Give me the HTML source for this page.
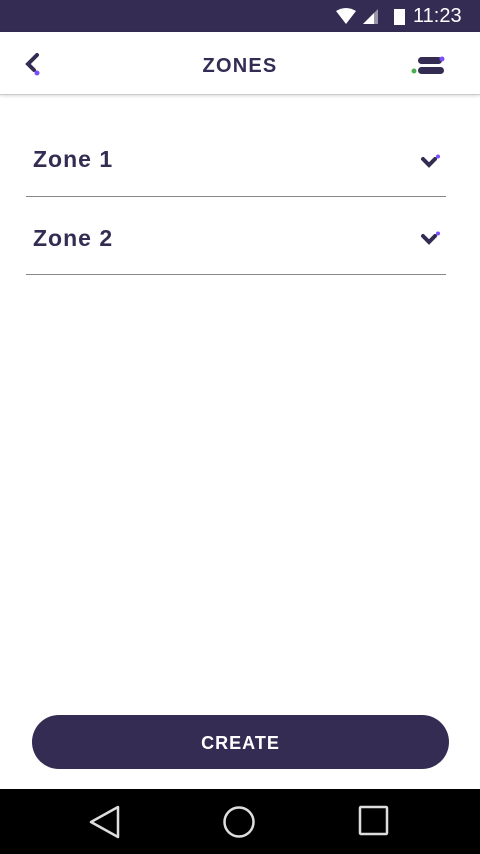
<!DOCTYPE html>
<html><head><style>
body{margin:0;width:480px;height:854px;position:relative;background:#fff;font-family:"Liberation Sans",sans-serif;overflow:hidden}
.sb{position:absolute;top:0;left:0;width:480px;height:32px;background:#342c53;color:#fff}
.hd{position:absolute;top:32px;left:0;width:480px;height:62px;background:#fff;border-bottom:1px solid #ccc;box-shadow:0 1px 3px rgba(0,0,0,.15)}
.t{position:absolute;top:55px;left:0;width:480px;text-align:center;font-weight:bold;font-size:20px;color:#342c53;letter-spacing:1.2px}
.row{position:absolute;left:26px;width:420px;border-bottom:1px solid #888;font-weight:bold;font-size:23px;color:#342c53;letter-spacing:1px}
.btn{position:absolute;left:32px;top:715px;width:417px;height:54px;border-radius:27px;background:#342c53;color:#fff;font-weight:bold;font-size:18px;text-align:center;line-height:56px;letter-spacing:1px}
.nav{position:absolute;top:789px;left:0;width:480px;height:65px;background:#000}
</style></head><body>
<div class="sb">
<svg style="position:absolute;left:336px;top:8px" width="20" height="16"><path d="M0 3Q10 -3 20 3L10 16Z" fill="#fff"/></svg>
<svg style="position:absolute;left:362px;top:9px" width="18" height="16"><path d="M16 0V15H1Z" fill="#fff" opacity=".5"/><path d="M12 4V15H1L12 4Z" fill="#fff"/></svg>
<div style="position:absolute;left:394px;top:9px;width:11px;height:16px;background:#fff"></div>
<div style="position:absolute;left:413px;top:5px;font-size:20px">11:23</div>
</div>
<div class="hd"></div>
<svg style="position:absolute;left:24px;top:52px" width="20" height="24"><path d="M13 3L4 12L10 18" stroke="#342c53" stroke-width="4" fill="none" stroke-linecap="round"/><circle cx="13" cy="21" r="2.5" fill="#7c4dff"/></svg>
<div class="t">ZONES</div>
<svg style="position:absolute;left:408px;top:53px" width="40" height="26"><rect x="10" y="4" width="24" height="7" rx="3.5" fill="#342c53"/><rect x="10" y="14" width="26" height="7" rx="3.5" fill="#342c53"/><circle cx="34" cy="6" r="2.5" fill="#7c4dff"/><circle cx="6" cy="18" r="2.5" fill="#4caf50"/></svg>
<div class="row" style="top:146px;height:50px"><span style="position:absolute;left:7px;top:0">Zone 1</span>
<svg style="position:absolute;left:394px;top:7px" width="22" height="16"><path d="M3 6L9 12L15 6" stroke="#342c53" stroke-width="4" fill="none" stroke-linecap="round"/><circle cx="18" cy="3.5" r="2" fill="#7c4dff"/></svg></div>
<div class="row" style="top:225px;height:49px"><span style="position:absolute;left:7px;top:0">Zone 2</span>
<svg style="position:absolute;left:394px;top:5px" width="22" height="16"><path d="M3 6L9 12L15 6" stroke="#342c53" stroke-width="4" fill="none" stroke-linecap="round"/><circle cx="18" cy="3.5" r="2" fill="#7c4dff"/></svg></div>
<div class="btn">CREATE</div>
<div class="nav">
<svg style="position:absolute;left:88px;top:16px" width="34" height="34"><path d="M30 2V32L3 17Z" stroke="#ddd" stroke-width="2.5" fill="none" stroke-linejoin="round"/></svg>
<svg style="position:absolute;left:222px;top:16px" width="34" height="34"><circle cx="17" cy="17" r="14.5" stroke="#ddd" stroke-width="2.5" fill="none"/></svg>
<svg style="position:absolute;left:358px;top:16px" width="32" height="32"><rect x="2" y="2" width="27" height="27" rx="1" stroke="#ddd" stroke-width="2.5" fill="none"/></svg>
</div>
</body></html>
